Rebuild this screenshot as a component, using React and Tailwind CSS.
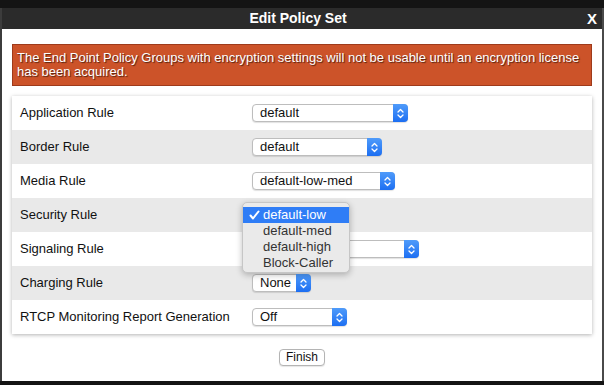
import React from "react";

const rows = [
  { label: "Application Rule", value: "default", w: "w-[156px]" },
  { label: "Border Rule", value: "default", w: "w-[130px]" },
  { label: "Media Rule", value: "default-low-med", w: "w-[143px]" },
  { label: "Security Rule", value: null, w: "" },
  // text of this one is hidden behind the open menu
  { label: "Signaling Rule", value: "", w: "w-[167px]" },
  { label: "Charging Rule", value: "None", w: "w-[59px]" },
  { label: "RTCP Monitoring Report Generation", value: "Off", w: "w-[95px]" },
];

const options = ["default-low", "default-med", "default-high", "Block-Caller"];

function Select({ value, w }) {
  return (
    <div
      className={`${w} h-[18px] flex rounded-[4px] border border-[#bdbdbd] bg-white shadow-[0_1px_1px_rgba(0,0,0,0.12)]`}
    >
      <span className="flex-1 pl-[7px] text-[13px] leading-[16px] text-[#111] overflow-hidden whitespace-nowrap">
        {value}
      </span>
      <span className="w-[15px] -my-px -mr-px rounded-r-[4px] bg-gradient-to-b from-[#4f9bfa] to-[#1c6ef2] flex items-center justify-center">
        <svg width="7" height="11" viewBox="0 0 7 11" fill="none" stroke="white" strokeWidth="1.3" strokeLinecap="round" strokeLinejoin="round">
          <polyline points="1,4 3.5,1.5 6,4" />
          <polyline points="1,7 3.5,9.5 6,7" />
        </svg>
      </span>
    </div>
  );
}

function Dropdown() {
  return (
    <div className="absolute left-[230px] top-[4px] z-10 w-[108px] h-[71px] pt-[4px] rounded-[5px] border border-[#c6c6c6] bg-[#eaeaea] shadow-[0_2px_6px_rgba(0,0,0,0.25)]">
      {options.map((o, i) => (
        <div
          key={o}
          className={`h-[16px] relative pl-[20px] text-[13px] leading-[16px] ${
            i === 0 ? "bg-[#2f7df6] text-white" : "text-[#333]"
          }`}
        >
          {i === 0 && (
            <svg className="absolute left-[6px] top-[3px]" width="11" height="10" viewBox="0 0 11 10" fill="none" stroke="white" strokeWidth="2" strokeLinecap="round" strokeLinejoin="round">
              <polyline points="1.5,5.5 4,8.5 9.5,1.5" />
            </svg>
          )}
          {o}
        </div>
      ))}
    </div>
  );
}

export default function App() {
  return (
    <div className="w-[604px] h-[385px] bg-[#141414] overflow-hidden font-['Liberation_Sans',Arial,sans-serif]">
      <div className="flex pt-[8px] h-[381px]">
        <div className="w-[2px] bg-[#3c3c3c]" />
        <div className="w-[600px] flex flex-col bg-white">
          <div className="h-[21px] bg-[#2b2b2b] flex items-center relative">
            <div className="flex-1 text-center pr-[8px] text-white font-bold text-[14px]">
              Edit Policy Set
            </div>
            <span className="absolute right-[5px] top-0 text-white font-bold text-[15px] leading-[21px]">X</span>
          </div>
          <div className="px-[10px] pt-[15px]">
            <div className="border border-[#9e3a1b] bg-[#cc5329] px-[4px] pt-[6px] pb-[6px] text-[13px] leading-[14px] text-white [text-shadow:1px_1px_1px_rgba(0,0,0,0.6)]">
              The End Point Policy Groups with encryption settings will not be usable until an encryption license has been acquired.
            </div>
            <div className="mt-[10px] bg-white shadow-[0_1px_4px_rgba(0,0,0,0.3)]">
              {rows.map((r, i) => (
                <div
                  key={r.label}
                  className={`h-[34px] flex items-center relative ${i % 2 === 1 ? "bg-[#e9e9e9]" : "bg-white"}`}
                >
                  <span className="w-[240px] pl-[8px] text-[13px] text-[#111]">{r.label}</span>
                  {r.value !== null && <Select value={r.value} w={r.w} />}
                  {r.label === "Security Rule" && <Dropdown />}
                </div>
              ))}
            </div>
            <div className="mt-[15px] flex justify-center">
              <button className="h-[17px] px-[6px] rounded-[4px] border border-[#b4b4b4] bg-white text-[12px] leading-[15px] text-[#111] shadow-[0_1px_1px_rgba(0,0,0,0.1)]">
                Finish
              </button>
            </div>
          </div>
        </div>
        <div className="w-[2px] bg-[#4a4a4a]" />
      </div>
    </div>
  );
}
